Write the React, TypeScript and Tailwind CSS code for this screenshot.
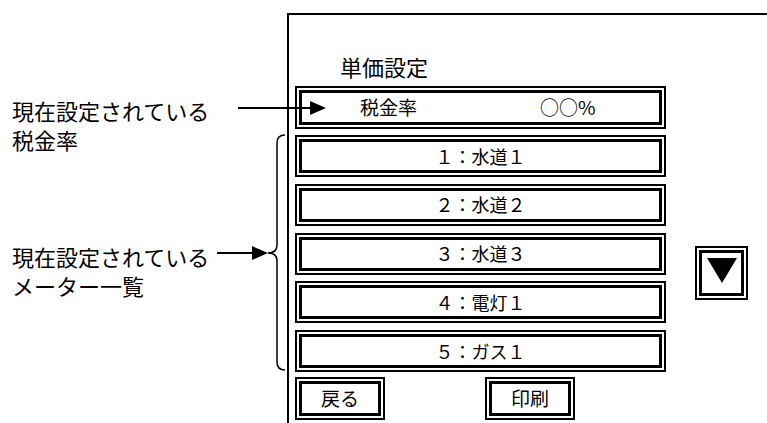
import type { ReactNode } from 'react';

function DoubleBox({ className, children }: { className?: string; children?: ReactNode }) {
  return (
    <div className={`border-2 border-black p-[2px] bg-white ${className ?? ''}`}>
      <div className="border-[3px] border-black h-full flex items-center">{children}</div>
    </div>
  );
}

const meters = ['１：水道１', '２：水道２', '３：水道３', '４：電灯１', '５：ガス１'];

export default function App() {
  return (
    <div className="relative w-[767px] h-[423px] overflow-hidden bg-white text-black flex font-['Noto_Sans_CJK_JP','Noto_Sans_CJK_SC',sans-serif] font-normal">
      {/* Annotations */}
      <div className="w-[287px] shrink-0 pl-[12px] pt-[96px] flex flex-col text-[22px] leading-[29px]">
        <div>
          <p>現在設定されている</p>
          <p>税金率</p>
        </div>
        <div className="mt-[88px]">
          <p>現在設定されている</p>
          <p>メーター一覧</p>
        </div>
      </div>

      {/* Screen panel */}
      <div className="mt-[13px] h-[430px] flex-1 border-t-2 border-l-2 border-black pl-[6px] pt-[37px]">
        <h1 className="ml-[45px] h-[28px] text-[22px] leading-[28px] font-normal">単価設定</h1>
        <div className="mt-[6px] flex">
          <div className="w-[371px] flex flex-col">
            <DoubleBox className="h-[43px]">
              <span className="ml-[58px] w-[180px] text-[19px]">税金率</span>
              <span className="text-[19px]">○○%</span>
            </DoubleBox>
            <div className="mt-[6px] flex flex-col gap-[6.75px]">
              {meters.map((m) => (
                <DoubleBox key={m} className="h-[42px]">
                  <span className="w-full text-center text-[18px]">{m}</span>
                </DoubleBox>
              ))}
            </div>
            <div className="mt-[5px] flex">
              <DoubleBox className="w-[90px] h-[43px]">
                <span className="w-full text-center text-[19px]">戻る</span>
              </DoubleBox>
              <DoubleBox className="ml-[100px] w-[90px] h-[43px]">
                <span className="w-full text-center text-[19px]">印刷</span>
              </DoubleBox>
            </div>
          </div>
          <DoubleBox className="ml-[29px] mt-[160px] w-[53px] h-[54px] self-start">
            <svg width="34" height="40" viewBox="0 0 34 40" className="mx-auto">
              <polygon points="2,5 32,5 17,30" fill="black" />
            </svg>
          </DoubleBox>
        </div>
      </div>

      {/* Arrows and brace drawn over the page */}
      <svg className="absolute inset-0 pointer-events-none" width="767" height="423" viewBox="0 0 767 423">
        <line x1="238" y1="108" x2="312" y2="108" stroke="black" strokeWidth="2" />
        <polygon points="310,101 326,108 310,115" fill="black" />
        <line x1="217" y1="253" x2="254" y2="253" stroke="black" strokeWidth="2" />
        <polygon points="252,246 268,253 252,260" fill="black" />
        <path
          d="M285 135 Q277 135 277 143 L277 245 Q277 253 268 253 Q277 253 277 261 L277 362 Q277 370 285 370"
          fill="none"
          stroke="black"
          strokeWidth="1.5"
        />
      </svg>
    </div>
  );
}
